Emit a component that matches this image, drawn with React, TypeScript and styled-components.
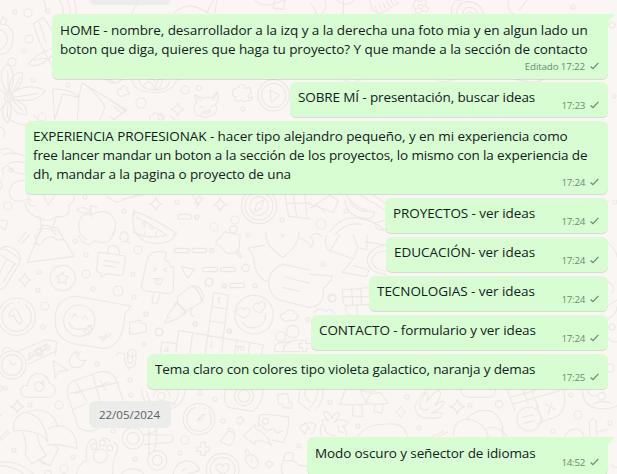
import React from 'react';
import styled, { createGlobalStyle } from 'styled-components';

const GlobalStyle = createGlobalStyle`
  * { box-sizing: border-box; }
  body { margin: 0; background: #faf6f3; overflow: hidden; }
`;

const Chat = styled.main`
  position: relative;
  width: 617px;
  height: 474px;
  overflow: hidden;
  background: #faf6f3;
  font-family: "Open Sans", "Noto Sans", sans-serif;
`;

const Wallpaper = styled.svg`
  position: absolute;
  inset: 0;
  fill: none;
  stroke: #eee8e4;
  stroke-width: 3.4;
  stroke-linecap: round;
  stroke-linejoin: round;
`;

const TileLetter = styled.text`
  fill: #e9e3df;
  stroke: none;
  font: 27px "Noto Sans", sans-serif;
`;

const Thread = styled.div`
  position: relative;
  display: flex;
  flex-direction: column;
  align-items: flex-end;
  padding-right: 9px;
`;

const DatePill = styled.div<{ $clipped?: boolean }>`
  align-self: flex-start;
  display: flex;
  align-items: center;
  justify-content: center;
  width: 82px;
  height: 27px;
  margin: ${p => (p.$clipped ? '-22px 0 9px 89px' : '12px 0 9px 89px')};
  padding-right: 1px;
  border-radius: 6px;
  background: #ececeb;
  color: #5b6065;
  font-size: 11.5px;
`;

const Bubble = styled.article<{ $w: number; $h: number; $gap: number; $tail?: boolean }>`
  position: relative;
  display: grid;
  width: ${p => p.$w}px;
  height: ${p => p.$h}px;
  margin-bottom: ${p => p.$gap}px;
  padding: ${p => (p.$tail ? '7px 8px 6px' : '6px 8px 5px')};
  border-radius: ${p => (p.$tail ? '6px 0 6px 6px' : '6px')};
  background: #d9fdd3;
  box-shadow: 0 1px 0.5px rgba(11, 20, 26, 0.13);
`;

const Body = styled.div`
  grid-area: 1 / 1;
  align-self: start;
`;

const Line = styled.div<{ $spacing: number }>`
  height: 19px;
  line-height: 19px;
  font-size: 13.5px;
  letter-spacing: ${p => p.$spacing}px;
  color: #111b21;
  white-space: nowrap;
`;

const Meta = styled.div<{ $edited?: boolean }>`
  grid-area: 1 / 1;
  place-self: end;
  display: flex;
  align-items: center;
  gap: 5px;
  height: 14px;
  margin-right: 1px;
  font-size: 9.8px;
  letter-spacing: ${p => (p.$edited ? '-0.16px' : '-0.3px')};
  color: #6f8a72;
  white-space: nowrap;
`;

const CheckIcon = styled.svg`
  width: 9px;
  height: 8px;
  fill: none;
  stroke: #6f8a72;
  stroke-width: 1.25;
`;

const TailIcon = styled.svg`
  position: absolute;
  top: 0;
  right: -6px;
  width: 12px;
  height: 9px;
  fill: #d9fdd3;
`;

type Text = [text: string, spacing: number];

interface Message {
  lines: Text[];
  time: string;
  edited?: boolean;
  w: number;
  h: number;
  gap?: number;
  tail?: boolean;
}

const firstDay: Message[] = [
  {
    lines: [
      ['HOME - nombre, desarrollador a la izq y a la derecha una foto mia y en algun lado un', -0.07],
      ['boton que diga, quieres que haga tu proyecto? Y que mande a la sección de contacto', -0.055],
    ],
    time: 'Editado 17:22', edited: true, w: 556, h: 65, tail: true, gap: 3,
  },
  { lines: [['SOBRE MÍ - presentación, buscar ideas', -0.12]], time: '17:23', w: 318, h: 35 },
  {
    lines: [
      ['EXPERIENCIA PROFESIONAK - hacer tipo alejandro pequeño, y en mi experiencia como', -0.07],
      ['free lancer mandar un boton a la sección de los proyectos, lo mismo con la experiencia de', -0.12],
      ['dh, mandar a la pagina o proyecto de una', -0.1],
    ],
    time: '17:24', w: 583, h: 73,
  },
  { lines: [['PROYECTOS - ver ideas', -0.08]], time: '17:24', w: 223, h: 35 },
  { lines: [['EDUCACIÓN- ver ideas', -0.02]], time: '17:24', w: 222, h: 35 },
  { lines: [['TECNOLOGIAS - ver ideas', -0.05]], time: '17:24', w: 239, h: 35 },
  { lines: [['CONTACTO - formulario y ver ideas', -0.1]], time: '17:24', w: 297, h: 35 },
  { lines: [['Tema claro con colores tipo violeta galactico, naranja y demas', -0.12]], time: '17:25', w: 461, h: 35, gap: 0 },
];

const secondDay: Message[] = [
  { lines: [['Modo oscuro y señector de idiomas', -0.11]], time: '14:52', w: 301, h: 38, tail: true },
];

function MessageBubble({ m }: { m: Message }) {
  return (
    <Bubble $w={m.w} $h={m.h} $gap={m.gap ?? 4} $tail={m.tail}>
      {m.tail && (
        <TailIcon viewBox="0 0 12 9"><path d="M0 0H11Q12.500 .3 11.500 1.500L6 8V9H0Z" /></TailIcon>
      )}
      <Body>
        {m.lines.map(([text, spacing]) => <Line key={text} $spacing={spacing}>{text}</Line>)}
      </Body>
      <Meta $edited={m.edited}>
        {m.time}
        <CheckIcon viewBox="0 0 9 8"><path d="M.6 4.500 3 6.700 8.400.8" /></CheckIcon>
      </Meta>
    </Bubble>
  );
}

/** Small circles scattered between the doodles: x, y, radius in pixels. */
const dots: [number, number, number][] = [
  [15, 12, 2], [28, 13, 4], [48, 11, 2], [29, 39, 4], [24, 51, 2], [12, 62, 4], [33, 80, 2], [42, 117, 4],
  [68, 85, 2], [141, 103, 5], [185, 90, 4], [199, 88, 2.500], [243, 109, 2], [161, 117, 3],
  [11, 170, 2], [8, 206, 4], [85, 197, 2], [124, 211, 2], [177, 202, 2], [197, 217, 2], [214, 227, 4], [235, 220, 4], [282, 220, 2],
  [346, 211, 2], [321, 224, 5], [75, 241, 2], [86, 255, 2], [138, 250, 4], [39, 272, 2], [86, 274, 4], [38, 290, 2], [93, 289, 2],
  [118, 291, 5], [133, 274, 2], [134, 297, 2], [45, 306, 4], [43, 327, 2], [146, 314, 2], [159, 332, 4], [144, 344, 2],
  [195, 324, 2], [209, 282, 4], [224, 286, 2], [229, 331, 2], [248, 235, 2],
  [132, 353, 4], [323, 264, 2], [332, 298, 4], [39, 352, 4], [31, 355, 2],
  [5, 388, 2], [30, 405, 2], [59, 405, 4], [97, 364, 2], [130, 380, 2], [131, 395, 2], [14, 450, 2], [73, 457, 2], [64, 469, 4],
  [113, 431, 2], [185, 440, 4], [180, 453, 2], [135, 459, 2], [215, 399, 2], [223, 421, 2], [200, 393, 2], [299, 446, 2], [48, 473, 3],
  [330, 402, 2], [407, 397, 2], [358, 426, 2], [419, 428, 2], [578, 415, 4], [571, 395, 2], [553, 431, 2], [610, 423, 2], [610, 368, 4],
  [612, 25, 3], [614, 96, 2], [615, 202, 2], [573, 7, 2], [612, 327, 3],
];

const Sparkle = ({ x, y, s = 1 }: { x: number; y: number; s?: number }) => (
  <path transform={`translate(${x} ${y}) scale(${s})`} d="M0-20Q4-4 20 0Q4 4 0 20Q-4 4-20 0Q-4-4 0-20Z" />
);

function Doodles() {
  return (
    <Wallpaper width="617" height="474" viewBox="0 0 617 474" aria-hidden="true">
      <g strokeWidth="1.100">
        {dots.map(([x, y, r]) => <circle key={`${x}-${y}`} cx={x} cy={y} r={r} />)}
      </g>

      {/* Upper left: rainbow, radish, crystals, flower, paper planes */}
      <g transform="scale(.33333)">
        <path d="M228 42Q232-10 195-30M210 42Q212 0 185-16M190 42Q190 10 172-5M130 0Q142 20 135 34M60 0L85-10M395 42Q410 5 440-10M640 0 620 38M650 0 645 38M520 40Q555 10 590 22L625 38M765 0Q790 30 850 0M825 0 820 25 850 28 855 0" />
        <path d="M0 72Q38 72 40 112Q38 160 0 164M0 88Q22 96 22 120Q18 142 0 150M0 70 8 50 20 60 14 74" />
        <path d="M100 72 130 52 156 90M100 72 120 130 158 200M118 68 138 128M84 195Q100 165 158 145M88 195Q120 205 158 165M100 182Q118 174 140 176" />
        <path d="M24 280Q-15 225 22 190Q55 225 28 280Q25 220 66 216Q75 250 32 282Q80 245 138 272Q105 315 34 296Q85 310 80 345Q40 345 28 302Q40 340 22 370Q-5 340 20 302Q0 342-30 345M20 285Q-10 255-25 260M25 276 23 215M34 286 60 232M38 292 115 280M36 299 68 332M24 305 22 350" />
        <circle cx="27" cy="292" r="13" /><circle cx="27" cy="292" r="5" />
        <path d="M158 268Q198 264 237 288L232 360M158 268 164 360M164 360 188 282 237 292M237 292 246 248 380 330 340 360M246 248Q285 270 315 320L300 360M330 300 378 334M340 318 365 340" />
        <path d="M318 238Q340 260 370 237M326 236 346 250M382 282Q358 298 352 278Q348 265 362 268Q368 250 382 262Q376 272 386 276Q390 284 382 282Z" />
        <path d="M395 237Q400 278 470 278Q520 275 530 238M415 238Q425 270 465 270M430 258Q450 230 465 270Q470 232 485 240Q490 260 465 270Q505 270 508 245M450 240Q458 230 465 245" />
        <Sparkle x={533} y={328} />
        <path d="M450 360Q445 345 458 345Q462 332 472 342Q485 338 484 350L492 356M510 348 525 360" />
        <path d="M588 345Q575 320 590 308L584 285 608 295Q625 290 635 294L652 276Q660 300 646 312Q655 332 642 344L618 352ZM592 290 602 302M648 284 640 300M600 318 610 324M640 315 630 322M615 330 622 336 630 328M602 345 610 334 620 344 632 334" />
        <path d="M700 268 718 262Q715 248 730 255Q738 260 735 265L750 262 754 280Q740 285 745 292Q750 296 757 290L754 300 730 305Q720 295 715 305L704 300 706 290Q695 288 698 276Z" />
        <circle cx="821" cy="286" r="47" /><circle cx="821" cy="286" r="36" /><path d="M810 270 840 286 814 306Z" />
      </g>

      {/* Upper right */}
      <g transform="translate(310) scale(.33333)">
        <path d="M0 10Q20 30 18 42M45 0Q55 25 35 40M80 0Q115 25 132 0M100 0V40M188 30 178 0 245-10 265 10 208 42ZM195 20 202 35M207 14 214 30M219 9 226 24M231 3 238 18M243 0 248 12" />
        <path d="M318 0 332 5 342-4 350 8 344 16 356 24 350 36 336 32 328 42 316 36 318 26 308 20 312 8Z" /><circle cx="332" cy="20" r="7" />
        <path d="M425 42Q420 0 455 0M440 42Q442 5 475 5Q515 10 520 42M458 42Q462 20 480 22Q500 25 502 42M470 42Q480 30 490 42M595 0Q590 30 610 42M650 0Q640 20 625 30 660 42M780 0Q785 42 830 40Q875 35 880 0M800 0Q805 28 832 26M890 25Q905 50 921 55M895 90Q912 105 918 130M895 170Q915 150 921 145M895 330Q918 320 921 300M905 360 921 335" />
        <path d="M380 241Q400 250 430 239M100 240 130 250 150 239M620 239Q670 252 700 239" />
      </g>

      {/* Left, below the long message */}
      <g transform="translate(0 115) scale(.33333)">
        <path d="M0 105Q30 90 45 120M10 120Q45 105 75 125M25 145Q55 135 74 145M10 178Q0 160 24 150Q40 180 75 176M0 195Q12 210 0 225M0 315 24 318 15 345 0 335M20 0Q30 25 74 30M100 0 115 15M330 5 345 14M0 35Q22 45 10 65" />
        <path d="M74 196Q30 195 28 235Q35 268 75 255Q90 245 92 258M85 245Q80 275 105 272M75 262Q80 300 120 308Q145 325 170 305Q215 310 206 270Q225 262 222 240M120 308 125 345 112 360M170 305 155 345 168 360M130 240 145 270 165 240M112 345Q140 335 168 348" />
        <path d="M275 300Q240 290 236 330Q235 360 260 375M275 300Q310 280 335 300Q355 325 340 360M275 305Q270 280 272 272L292 276M272 290Q250 300 230 285Q250 268 272 290Z" />
        <path d="M320 245 350 262 410 240M370 252 430 240M400 305 405 290Q440 300 520 348Q530 355 518 360M400 305Q395 340 412 360M410 308Q430 315 500 360M432 320Q424 330 432 336Q440 328 432 320ZM452 330Q446 342 456 342Q462 334 452 330ZM435 350 432 360M470 350 466 360M398 300 404 285" />
        <Sparkle x={467} y={267} /><Sparkle x={661} y={269} />
        <path d="M578 240 588 260 592 245 608 250 590 275 594 262 582 264" /><rect x="533" y="298" width="42" height="14" rx="7" /><circle cx="590" cy="306" r="6" />
        <circle cx="777" cy="273" r="53" /><circle cx="777" cy="273" r="42" /><circle cx="777" cy="273" r="28" /><path d="M764 290 770 266 792 254 784 280Z" />
        <path d="M855 240Q860 275 866 304L930 312M880 240 890 304M915 240 920 306M858 265H930" />
        <circle cx="700" cy="343" r="11" />
      </g>

      {/* Centre, beside the short messages */}
      <g transform="translate(310 115) scale(.33333)">
        <path d="M0 280 60 240 85 258 70 292 0 268M20 268 45 292M110 240Q120 265 165 285L195 292Q185 325 130 300Q105 280 105 255M120 262Q145 290 170 290M60 350Q95 300 150 310Q200 320 222 345M75 360Q105 320 155 328M195 325 226 315M198 325Q190 345 226 345" />
        <path d="M0 365Q20 345 35 365M150 240 225 285M190 240 226 265" />
      </g>

      {/* Middle left: clipboard, ice lolly, speech bubble, crossword */}
      <g transform="translate(0 235) scale(.33333)">
        <path d="M55 20 80-10M65 25 88 0M82 82 128-30 172-20 223 64ZM106 24Q120 38 132 15 150-5 172 15L190 14M110 24 105 0M235 0Q245 28 270 28Q285 10 300 22Q335 28 340-10M362 15Q355 0 370-10Q390-10 382 18L390 26M382 18 370 20M412 0Q430 25 470 26Q520 25 530-10M400-10Q440 15 500 0" />
        <path d="M0 45Q15 25 42 42Q68 58 58 85L12 160Q5 165 0 160M0 60 48 88M5 42Q40 50 58 75M0 112 18 75M10 140 42 88" />
        <Sparkle x={74} y={135} /><circle cx="188" cy="129" r="38" />
        <path d="M188 111 193 123 206 125 196 134 198 147 186 141 174 145 177 132 170 123 182 122Z" />
        <path d="M300 52 370 62Q380 65 376 75L370 115Q368 123 360 121L320 116 304 127 303 114Q288 112 290 100L294 60Q295 52 300 52ZM324 54Q320 32 340 31Q360 33 358 60M312 76 360 84M310 90 345 97" />
        <path d="M442 75Q450 45 490 50Q500 50 499 57Q490 68 500 80Q505 75 508 85Q510 98 522 98L520 165Q518 176 505 176L438 168Q422 165 425 150ZM460 97 470 102 461 108M500 99 490 106 501 110M460 131 488 131Q485 150 474 149Q465 146 466 132M474 132V140M462 173 456 198Q458 208 466 207Q474 205 474 198L480 176" />
        <path d="M543 94 584 103 562 130Z" />
        <g><rect x="523" y="40" width="45" height="13" rx="6" /><rect x="576" y="40" width="44" height="13" rx="6" /><circle cx="635" cy="47" r="6" /><rect x="608" y="97" width="45" height="13" rx="6" /><rect x="661" y="97" width="46" height="13" rx="6" /><circle cx="737" cy="99" r="11" /><circle cx="627" cy="141" r="11" /><circle cx="673" cy="152" r="6" /><rect x="688" y="145" width="45" height="13" rx="6" /><circle cx="765" cy="152" r="6" /></g>
        <g><circle cx="438" cy="237" r="6" /><circle cx="477" cy="291" r="11" /><circle cx="586" cy="266" r="6" /><circle cx="689" cy="289" r="6" /></g>
        <path d="M648 20Q665 5 675-10L720 0 718 38 710 52Q690 60 675 52Q670 35 648 28ZM705 50 722 69 724 62 713 44" />
        <path d="M798-10Q790 30 848 67Q900 30 896-10M843-2 847 6 852-2M794 30 744 40Q765 60 764 95Q780 140 806 138M806 140Q810 100 850 88L930 105M806 140Q808 190 850 198L930 218M855 126 930 145M850 157 898 170M900 10Q925 20 930 30" />
        <circle cx="50" cy="245" r="56" /><circle cx="50" cy="245" r="44" strokeDasharray="195 18 2 18" />
        <path d="M27 236 38 222Q48 218 50 226L66 256Q68 264 60 266Q52 264 50 258L40 240 34 244Q26 244 27 236ZM80 215V216M92 241V242M82 270V271M56 201V202" />
        <path d="M165 255Q165 190 225 183L393 213 374 238Q372 330 315 341L225 327Q165 315 165 255Z" /><circle cx="238" cy="257" r="47" />
        <path d="M217 246Q222 230 230 244M249 250Q256 235 263 252M207 262Q215 290 253 281M252 286 272 270Q280 290 265 298Q255 298 252 286M258 280 266 290M295 305 308 317 335 295M302 302 310 310 322 296" />
        <path d="M390 260 405 261 408 256 422 257 424 264 438 266 439 290 400 298 388 296ZM390 260Q388 275 390 296" />
        <path d="M494 265 505 238 530 205Q540 212 556 232L530 252ZM505 250 512 246M522 208 530 200 560 232 550 240M533 200 533 185 575 152Q605 150 610 185L607 200 558 228M575 152Q600 165 607 200M585 157Q604 175 603 196M578 218Q565 240 580 244" />
        <path d="M641 173 685 180 665 350M641 173 618 340M635 215 679 222M629 258 673 264M528 350 536 286 790 330 784 360M578 292 570 355M623 300 616 355M710 315 704 360M750 322 744 360M480 360 486 320 530 326" />
        <TileLetter x="652" y="205">t</TileLetter>
        <TileLetter x="631" y="332">j</TileLetter>
        <TileLetter x="710" y="347">m</TileLetter>
        <TileLetter x="492" y="352">a</TileLetter>
        <circle cx="762" cy="239" r="58" />
        <path d="M716 220Q726 215 732 225Q740 212 748 222Q752 238 732 250Q708 240 709 228Q710 222 716 220ZM762 210Q770 200 776 207Q784 194 794 202Q800 220 780 234Q758 226 758 216ZM726 262Q745 285 770 276Q800 268 796 237" />
        <path d="M850 255Q835 245 845 237Q850 236 855 235Q860 220 875 225Q885 225 882 234Q900 240 892 250Q880 262 870 254Q860 262 850 255Z" />
        <circle cx="842" cy="305" r="15" /><circle cx="878" cy="290" r="19" />
        <path d="M824 350Q820 325 840 324L895 315M850 350Q850 325 870 322M824 350H900M905 316V326H898V338H908V350H920V340H930M905 316H918V326H930" />
        <path d="M50 350 130 318Q145 310 170 322L166 360M100 350 140 326M8 350Q10 325 45 350M215 360 230 348V360M350 360Q355 345 375 360" />
        <circle cx="142" cy="338" r="8" /><circle cx="118" cy="351" r="8" /><circle cx="923" cy="254" r="6" />
      </g>

      {/* Middle right */}
      <g transform="translate(310 235) scale(.33333)">
        <path d="M50 0Q40 25 55 45L130 72 143 38 130 0M60 50 88 0M130 72 96 112 170 125 177 105 130 92M143 38 170 45 172 0M165 20 228 30M228 28Q170 40 172 80Q180 115 228 118M228 48Q185 50 185 80Q195 108 228 108" />
        <path d="M0 118 68 123Q60 145 40 160Q45 215 0 216M0 5Q20 20 0 38M98 165 178 158M98 165Q95 210 108 212L178 208M125 162 128 212M152 160 155 210M98 185H178M110 212Q100 235 120 240M140 211 142 240M10 235Q30 210 48 230Q60 215 75 235" />
        <circle cx="67" cy="190" r="10" />
        <path d="M895 25Q920 45 921 65M895 140Q920 155 905 175M895 210 921 195M895 250Q920 240 921 215M895 310Q910 325 921 320" />
      </g>

      {/* Lower left: clock, cloud, mushrooms, paw, scissors, camera */}
      <g transform="translate(0 354) scale(.33333)">
        <circle cx="36" cy="33" r="42" /><circle cx="36" cy="33" r="31" /><path d="M28 18 38 34 48 26M78 20 145-20M85 30 170-10M0 95 8 100 0 115" />
        <path d="M160 20 205 50 178 52 166 72ZM213 5Q200 30 220 40Q248 45 257 18Q238 24 232 8 235 0 242-8M373 10Q375 40 392 42Q410 38 408 5M382-5 384 22Q390 35 398 22V-5M388 42 387 50" />
        <path d="M82 130Q58 128 62 105Q68 92 82 95Q82 65 112 58Q142 60 148 88Q170 95 165 115Q160 130 145 130ZM130 88Q110 75 103 95Q105 115 122 112Q135 106 130 90M130 80V92L120 88" />
        <path d="M205 130Q195 95 220 80L295 55Q335 45 350 80L370 142M205 130 235 220M228 85 260 142M210 118 355 85M220 165 260 148M278 62 300 140M225 120 265 104M300 78 318 108M290 98 325 85M235 220Q265 240 290 225L320 210" />
        <Sparkle x={52} y={158} /><path d="M0 185 8 178M0 250 24 230M0 260 30 235" />
        <path d="M42 230Q35 190 75 175Q130 180 143 262Q115 225 42 230ZM85 173Q120 160 150 180Q172 200 172 220M145 225Q175 205 205 225Q232 245 230 284Q190 270 142 272M68 236Q85 275 75 300L95 330 140 304Q115 275 112 242M118 318 150 335 175 285 162 272M150 335 120 325" />
        <path d="M230 360Q232 330 260 320Q252 275 275 255Q290 255 290 270M305 253Q325 250 330 265M340 265Q360 270 348 300Q340 310 338 360" />
        <circle cx="301" cy="306" r="21" /><circle cx="282" cy="278" r="9" /><circle cx="307" cy="267" r="9" /><circle cx="330" cy="282" r="9" />
        <circle cx="399" cy="253" r="32" /><circle cx="399" cy="253" r="18" /><circle cx="472" cy="319" r="29" /><circle cx="472" cy="319" r="15" />
        <path d="M429 242 515 243Q525 255 515 265L432 272M447 272 446 220M468 270 470 220M446 300V272M462 290 468 270M443 240 470 230" />
        <path d="M425 108Q430 165 490 168Q550 165 555 110M440 112Q445 150 470 155M535 110Q535 140 515 155" /><circle cx="484" cy="127" r="11" /><path d="M460 130Q462 110 475 108M510 130Q510 115 500 108M450 150Q485 130 525 152" />
        <circle cx="597" cy="195" r="47" /><circle cx="597" cy="195" r="37" strokeDasharray="165 10 2 14 2 14" /><path d="M592 200 605 183 615 180 606 193Z" />
        <path d="M675 108Q670 150 685 160L755 172Q785 160 790 108" /><circle cx="732" cy="126" r="29" /><circle cx="732" cy="126" r="18" />
        <path d="M833 122 863 118 867 145 875 145 876 163 850 160 848 150 835 150ZM710 195 722 187 733 200 720 212 708 202M900 110 895 145 930 170M915 108Q910 130 930 145M900 215 912 212 918 205 922 218 930 222 918 228 915 240 906 230 900 225Z" />
        <path d="M675 245 685 230 704 238 702 258 690 276 660 262ZM685 232V224Q695 220 700 228V235M603 265H616V279H628V292H616V304H603V292H590V279H603Z" />
        <path d="M730 245 765 212 766 225Q800 235 815 275Q790 255 766 262L764 272ZM775 218 778 183Q800 178 866 190Q868 230 850 265L815 258M803 230 820 222 832 238 848 230M778 210 800 230" /><circle cx="796" cy="202" r="9" />
        <path d="M735 310 750 300Q770 305 775 325Q775 340 760 344Q740 335 735 310ZM737 302 736 288Q745 284 749 298M755 315V324M796 330 808 319 820 330 808 342Z" />
        <circle cx="668" cy="347" r="49" /><circle cx="668" cy="347" r="37" />
        <path d="M668 360Q642 345 650 333Q660 324 668 338Q675 323 686 333Q692 348 668 360M520 360Q525 325 560 320Q595 325 598 350L560 360M545 350 560 342M365 360Q375 345 400 344Q425 348 430 360M0 325Q50 315 100 360M0 335Q40 335 70 360M850 320 855 300Q870 290 880 300L878 320ZM850 320Q840 345 848 360M878 320Q900 340 920 335" />
      </g>

      {/* Lower right: trees, hand, mushrooms, pills */}
      <g transform="translate(310 354) scale(.33333)">
        <path d="M90 150 106 108M85 150Q125 155 172 150L150 112M130 152 127 185 158 188 155 152M168 145Q185 155 235 148L210 115 180 120ZM195 152 192 172 215 178 220 152M152 108Q170 120 195 110M20 165Q42 140 38 108M0 160Q18 145 24 108" />
        <path d="M315 155Q325 130 350 110M315 155Q318 195 355 192Q400 195 395 180Q385 172 365 178Q400 160 403 145Q398 135 375 155Q400 118 388 110Q375 110 350 142Q360 115 345 118L328 150M330 155Q335 175 355 165" />
        <Sparkle x={272} y={175} s={.85} /><Sparkle x={442} y={158} s={1.100} />
        <circle cx="480" cy="153" r="6" /><circle cx="567" cy="151" r="11" />
        <path d="M452 108Q455 130 478 130H535Q555 128 557 108M592 108 615 170M600 130 680 108M608 150 750 110M760 108Q775 155 745 185L680 210M680 155 700 205M665 110 685 160M640 108 655 150M705 150 735 165M725 145 715 178" />
        <circle cx="657" cy="195" r="36" /><path d="M638 190 670 182M642 208 673 200" />
        <path d="M817 108Q820 165 880 165Q910 162 921 155M832 108Q840 130 860 125M850 150Q870 135 905 148" /><circle cx="875" cy="127" r="11" />
        <path d="M35 245Q25 220 40 210Q30 190 55 200Q35 180 45 173Q62 175 65 195Q75 172 88 178Q88 195 70 205Q100 190 115 205Q108 220 95 215Q115 235 108 247M45 215Q40 240 75 245M85 215Q80 235 100 235M0 205 18 212 10 235 0 240M145 245Q170 210 230 210Q285 205 292 247M368 247 400 232M385 247 412 235M430 245Q430 200 470 195Q520 200 535 247M470 195Q500 160 545 172Q585 200 578 247M530 225Q560 210 590 245M765 247Q775 222 805 225Q820 235 822 247M840 247 838 205Q848 188 858 200L860 247M860 235 895 225M905 330Q910 345 921 340" />
      </g>
    </Wallpaper>
  );
}

export default function App() {
  return (
    <>
      <GlobalStyle />
      <Chat>
        <Doodles />
        <Thread>
          <DatePill $clipped />
          {firstDay.map(m => <MessageBubble key={m.lines[0][0]} m={m} />)}
          <DatePill>22/05/2024</DatePill>
          {secondDay.map(m => <MessageBubble key={m.lines[0][0]} m={m} />)}
        </Thread>
      </Chat>
    </>
  );
}
